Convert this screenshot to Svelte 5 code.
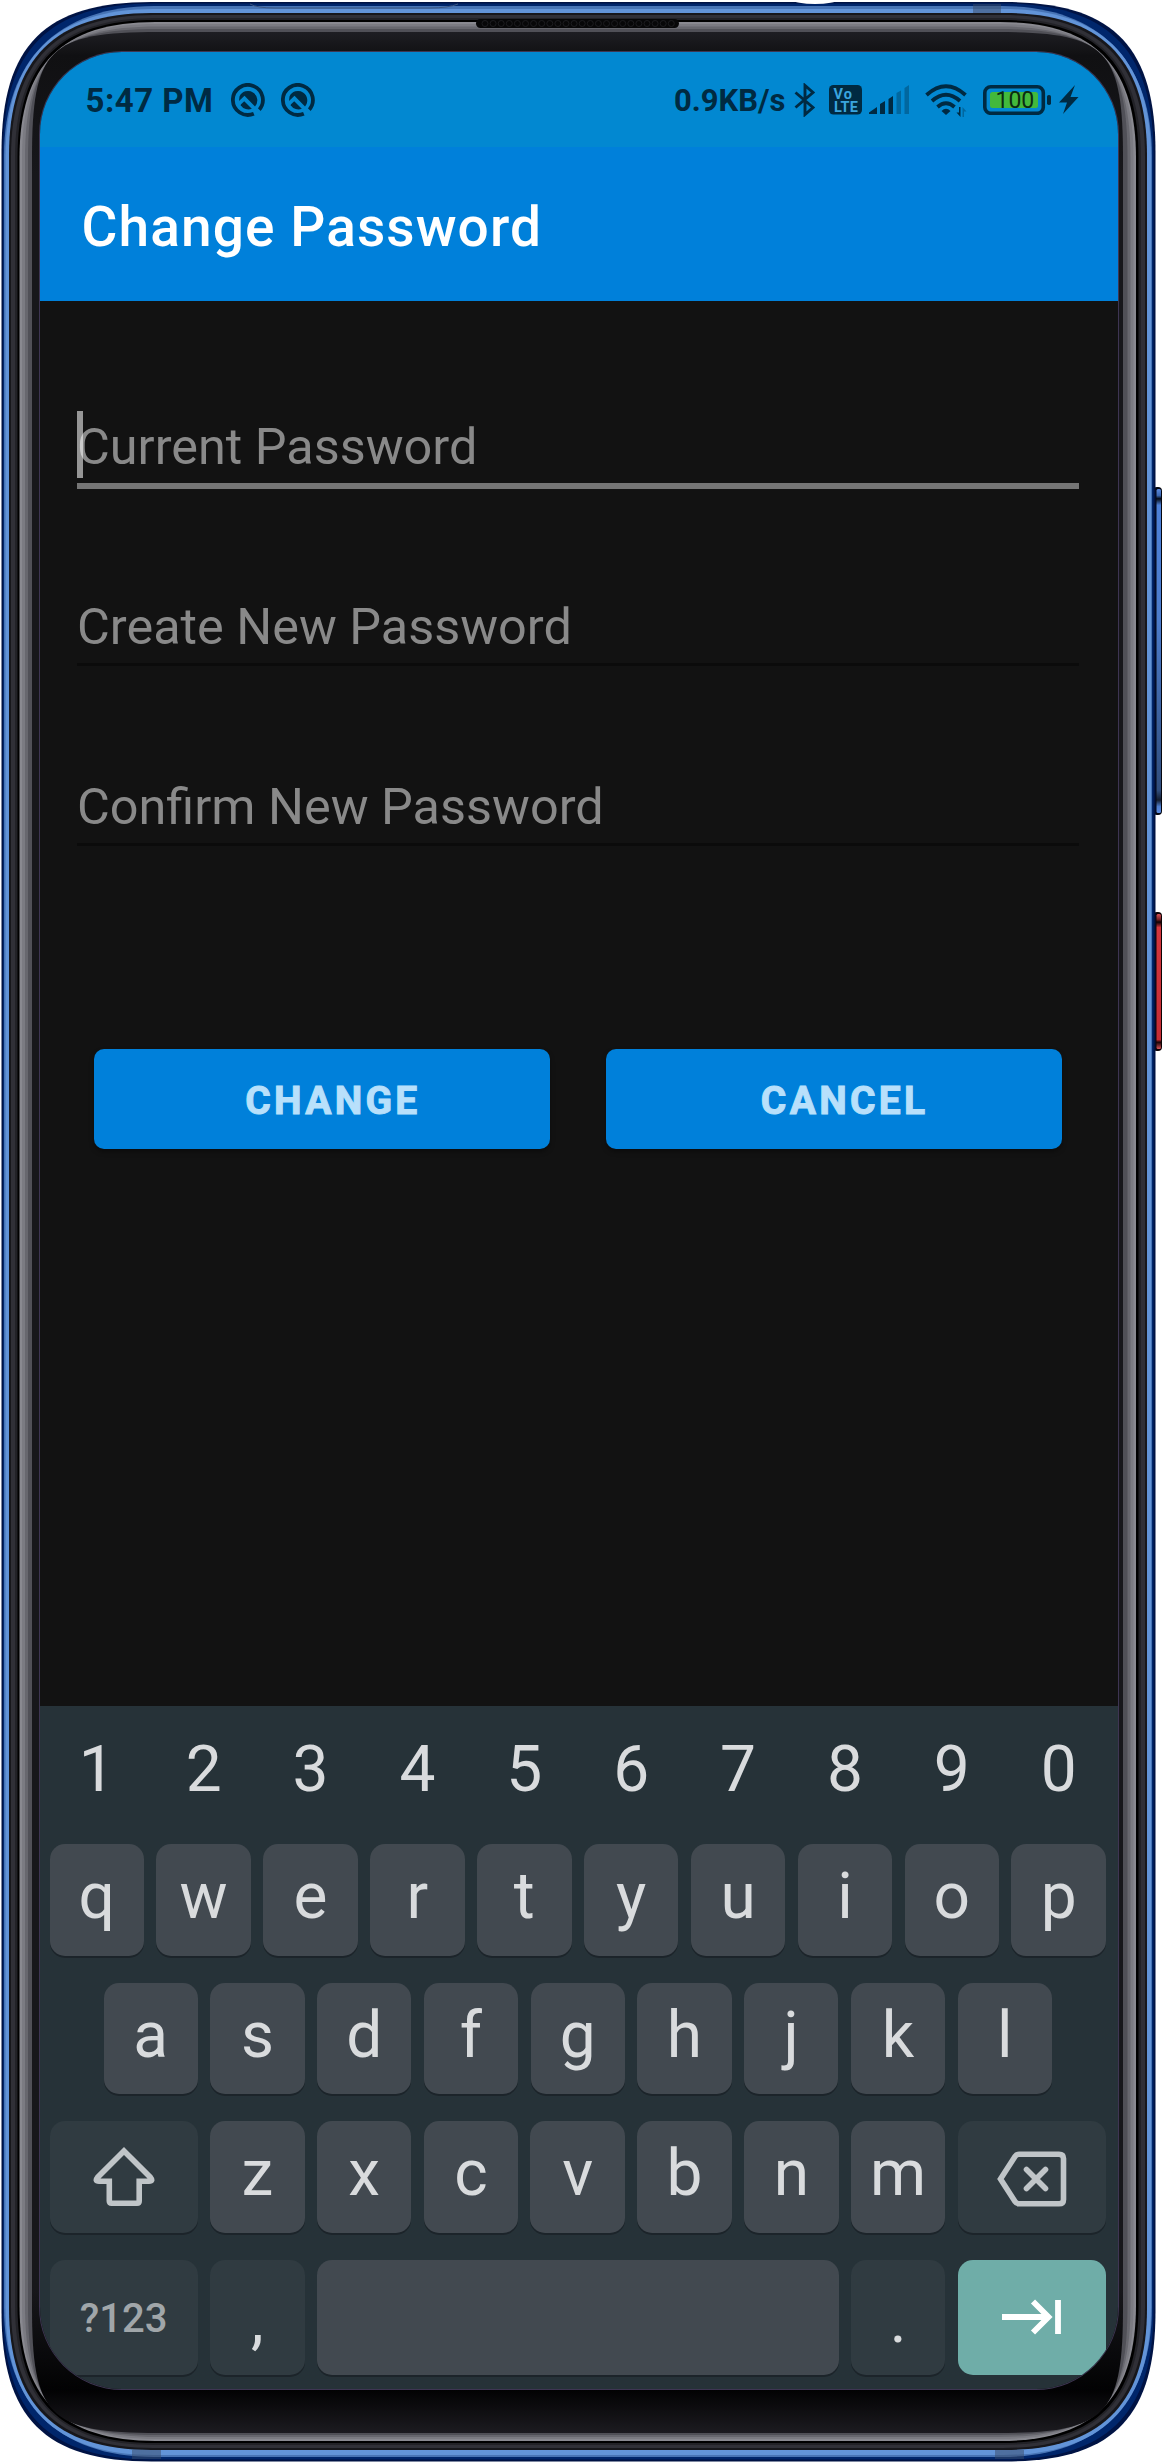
<script>
  // Rounded-rectangle outline with soft, squircle-like corners.
  // reach: length of each corner curve, depth: inset of the curve on the diagonal.
  function shell(l, t, r, b, reach, depth) {
    const c = (8 * depth - reach) / 3;
    return [
      `M${l} ${t + reach}`,
      `C${l} ${t + c} ${l + c} ${t} ${l + reach} ${t}`,
      `H${r - reach}`,
      `C${r - c} ${t} ${r} ${t + c} ${r} ${t + reach}`,
      `V${b - reach}`,
      `C${r} ${b - c} ${r - c} ${b} ${r - reach} ${b}`,
      `H${l + reach}`,
      `C${l + c} ${b} ${l} ${b - c} ${l} ${b - reach}Z`
    ].join('');
  }

  const layers = [
    { d: shell(1.5, 2, 1155.5, 2461.5, 150, 35), fill: '#001344' },
    { d: shell(3, 3.5, 1153.5, 2459.5, 150, 36), fill: '#00266b' },
    { d: shell(4, 6, 1152, 2457, 150, 39), fill: '#4774b5' },
    { d: shell(5.5, 9, 1151, 2455, 148, 37), fill: '#6294d8' },
    { d: shell(9, 13, 1147, 2450, 142, 35), fill: '#17171b' },
    { d: shell(11, 15, 1145, 2448, 142, 35), fill: '#303037' },
    { d: shell(15, 18, 1141, 2445, 140, 34), fill: '#222227' },
    { d: shell(17.5, 20, 1138.5, 2443, 138, 33), fill: '#000000' },
    { d: shell(19.5, 22, 1136, 2441, 136, 33), fill: '#898990' },
    { d: shell(22, 24, 1133.5, 2439, 134, 31), fill: '#7b7b82' },
    { d: shell(25, 26.5, 1130.5, 2437, 132, 29), fill: '#67676e' },
    { d: shell(28, 29, 1127.5, 2435, 130, 26), fill: '#505057' },
    { d: shell(32, 32, 1123, 2433, 126, 22), fill: 'url(#bezel)' }
  ];

  const grille = Array.from({ length: 24 }, (_, i) => 485 + i * 8.1);

  const digits = [...'1234567890'];
  const top = [...'qwertyuiop'];
  const home = [...'asdfghjkl'];
  const bottom = [...'zxcvbnm'];
  const fields = [
    { hint: 'Current Password', active: true },
    { hint: 'Create New Password', active: false },
    { hint: 'Confirm New Password', active: false }
  ];
</script>

{#snippet notice()}
  <svg class="notice" width="34" height="34" viewBox="0 0 34 34">
    <path d="M27.8 27.2A15 15 0 1 0 22.8 30.7" fill="none" stroke="currentColor" stroke-width="3.8" />
    <path d="M8.500 13.500A9.300 9.300 0 1 1 24 23.400L13.500 12.800L8 18Z" fill="currentColor" />
    <path d="M13.200 18.200L20.800 25.800A9.300 9.300 0 0 1 9.800 22.500V21.500Z" fill="currentColor" />
    <path d="M25.500 25.500L30.500 30.500" stroke="#0288d1" stroke-width="2.400" />
  </svg>
{/snippet}

<div class="stage">
  <svg class="chassis" width="1162" height="2462" viewBox="0 0 1162 2462">
    <defs>
      <linearGradient id="bezel" x1="0" y1="0" x2="0" y2="1">
        <stop offset="0" stop-color="#1e1e23" />
        <stop offset="0.01" stop-color="#101012" />
        <stop offset="0.06" stop-color="#17171b" />
        <stop offset="0.94" stop-color="#17171b" />
        <stop offset="0.982" stop-color="#020203" />
        <stop offset="1" stop-color="#1c1b20" />
      </linearGradient>
      <linearGradient id="volume" x1="0" y1="0" x2="0" y2="1">
        <stop offset="0" stop-color="#5b8ae0" />
        <stop offset="0.02" stop-color="#3a66b0" />
        <stop offset="0.03" stop-color="#050a14" />
        <stop offset="0.05" stop-color="#4c80d8" />
        <stop offset="0.4" stop-color="#4c7ccc" />
        <stop offset="0.93" stop-color="#304d7c" />
        <stop offset="0.96" stop-color="#141d2e" />
        <stop offset="0.98" stop-color="#4c7ccc" />
        <stop offset="1" stop-color="#5b8ae0" />
      </linearGradient>
      <linearGradient id="power" x1="0" y1="0" x2="0" y2="1">
        <stop offset="0" stop-color="#d8545a" />
        <stop offset="0.04" stop-color="#7a2226" />
        <stop offset="0.06" stop-color="#0a0203" />
        <stop offset="0.1" stop-color="#d3363e" />
        <stop offset="0.93" stop-color="#c42d35" />
        <stop offset="0.95" stop-color="#1a0506" />
        <stop offset="1" stop-color="#d8545a" />
      </linearGradient>
    </defs>
    <rect x="1153" y="487" width="9" height="328" rx="4" fill="#05070f" />
    <rect x="1156.5" y="489" width="4.500" height="324" rx="1.5" fill="url(#volume)" />
    <rect x="1153" y="912" width="9" height="139" rx="4" fill="#0d0304" />
    <rect x="1156.5" y="914" width="4.500" height="135" rx="1.5" fill="url(#power)" />
    {#each layers as layer}
      <path d={layer.d} fill={layer.fill} />
    {/each}
    <path d="M250 4Q257 8 275 8H430Q448 8 458 4" fill="none" stroke="#3d5680" stroke-width="1" />
    <ellipse cx="815" cy="0" rx="22" ry="4" fill="#ffffff" />
    <g fill="#3a4a66" opacity="0.5">
      <rect x="973" y="4" width="28" height="9" />
      <rect x="132" y="2450" width="29" height="9" />
      <rect x="995" y="2450" width="29" height="9" />
    </g>
    <rect x="476" y="19" width="203" height="9" rx="4.5" fill="#070708" />
    {#each grille as x}
      <circle cx={x} cy="23.5" r="3" fill="none" stroke="#1d1d20" stroke-width="1" />
    {/each}
  </svg>

  <main class="screen">
    <header class="status">
      <span class="clock">5:47 PM</span>
      {@render notice()}
      {@render notice()}
      <span class="speed">0.9KB/s</span>
      <svg class="bt" width="22" height="34" viewBox="0 0 22 34">
        <path d="M1.5 9.5L19 24.5L11 31.5V2.5L19 9.5L1.5 24.5" fill="none" stroke="currentColor" stroke-width="2.9" />
      </svg>
      <svg class="volte" width="33" height="30" viewBox="0 0 33 30">
        <rect width="33" height="29.5" rx="4.5" fill="currentColor" />
        <text x="4.500" y="13.500" textLength="18.500" class="tiny">Vo</text>
        <text x="5" y="26.500" textLength="24" class="tiny">LTE</text>
      </svg>
      <svg class="signal" width="41" height="30" viewBox="0 0 41 30">
        <path d="M0 29V27.5L8 22V29ZM11 29V19L16 16V29ZM19.500 29V14L24 11V29Z" fill="currentColor" />
        <path d="M27.500 29V8L32 5.500V29ZM35.500 29V3L40 0V29Z" fill="currentColor" opacity="0.35" />
      </svg>
      <svg class="wifi" width="43" height="34" viewBox="0 0 43 34">
        <g fill="none" stroke="currentColor" stroke-width="3.8">
          <path d="M1.500 11Q21 -6.500 40.500 11" />
          <path d="M7 17Q21 4.500 35 17" />
          <path d="M12.500 23Q21 15.500 29.500 23" />
        </g>
        <path d="M16.500 27Q21 22.500 25.500 27L21 31Z" fill="currentColor" />
        <path d="M35.500 23V33L31.500 28.500H34V23Z" fill="currentColor" />
        <path d="M37.500 33V23L41.500 27.500H39V33Z" fill="currentColor" opacity="0.35" />
      </svg>
      <svg class="battery" width="69" height="30" viewBox="0 0 69 30">
        <rect x="1.800" y="1.800" width="58.500" height="26.500" rx="6" fill="none" stroke="currentColor" stroke-width="3.600" />
        <rect x="7" y="7" width="48" height="16" rx="2.500" fill="#43b93c" />
        <rect x="64" y="10" width="4" height="10" rx="1.800" fill="currentColor" />
        <text x="12.500" y="23.300" class="charge">100</text>
      </svg>
      <svg class="bolt" width="20" height="30" viewBox="0 0 20 30">
        <path d="M16 0L0 17.500H8L4 29L19.500 12H11.500Z" fill="currentColor" />
      </svg>
    </header>

    <div class="appbar"><h1>Change Password</h1></div>

    <section class="form">
      {#each fields as field}
        <div class="field" class:active={field.active}>
          <span class="hint">{field.hint}</span>
          {#if field.active}<i class="caret"></i>{/if}
        </div>
      {/each}
      <div class="actions">
        <button>CHANGE</button>
        <button class="cancel">CANCEL</button>
      </div>
    </section>

    <section class="keyboard">
      <div class="row digits">
        {#each digits as k}<span class="digit">{k}</span>{/each}
      </div>
      <div class="row">
        {#each top as k}<span class="key">{k}</span>{/each}
      </div>
      <div class="row home">
        {#each home as k}<span class="key">{k}</span>{/each}
      </div>
      <div class="row">
        <span class="key wide dim">
          <svg width="62" height="60" viewBox="0 0 62 60">
            <path d="M31 4L57.500 30.500Q60.500 34.200 56 34.200H46.200V54Q46.200 56.200 44 56.200H18.500Q16.300 56.200 16.300 54V34.200H6Q1.500 34.200 4.500 30.500Z" fill="none" stroke="#c0c5c8" stroke-width="5.600" />
          </svg>
        </span>
        {#each bottom as k}<span class="key">{k}</span>{/each}
        <span class="key wide dim">
          <svg class="erase" width="70" height="56" viewBox="0 0 70 56">
            <path d="M3.500 28L18 5.500Q19.500 3.200 22 3.200H62Q66.500 3.200 66.500 7.500V48.500Q66.500 52.800 62 52.800H22Q19.500 52.800 18 50.500Z" fill="none" stroke="#c0c5c8" stroke-width="5.600" />
            <path d="M29.500 18.500L48.500 37.500M48.500 18.500L29.500 37.500" stroke="#c0c5c8" stroke-width="5.600" stroke-linecap="round" />
          </svg>
        </span>
      </div>
      <div class="row last">
        <span class="key wide dim mode">?123</span>
        <span class="key dim comma">,</span>
        <span class="key space"></span>
        <span class="key dim period">.</span>
        <span class="key wide next">
          <svg width="60" height="36" viewBox="0 0 60 36">
            <path d="M0 18H46M31 2.500L46.500 18L31 33.500M56 1V35" fill="none" stroke="#ffffff" stroke-width="5.800" />
          </svg>
        </span>
      </div>
    </section>
  </main>
</div>

<style>
  :global(body) {
    margin: 0;
    background: #ffffff;
  }
  .stage {
    position: relative;
    box-sizing: border-box;
    width: 1162px;
    height: 2462px;
    padding: 52px 0 0 39.5px;
    overflow: hidden;
    font-family: Roboto, 'Liberation Sans', sans-serif;
  }
  .chassis {
    position: absolute;
    inset: 0;
  }
  .screen {
    position: relative;
    box-sizing: border-box;
    display: flex;
    flex-direction: column;
    width: 1078.5px;
    height: 2336.5px;
    border-radius: 82px;
    overflow: hidden;
    background: #121212;
    box-shadow: 0 0 0 1px #3e3553;
  }
  svg {
    display: block;
    flex: none;
  }

  .status {
    box-sizing: border-box;
    display: flex;
    align-items: center;
    height: 95px;
    flex: none;
    padding: 0 39px 0 46px;
    background: #0288d1;
    color: #002a42;
    white-space: nowrap;
  }
  .clock {
    width: 128.5px;
    margin-top: 2px;
    font-size: 33px;
    font-weight: 700;
    letter-spacing: 0.5px;
  }
  .notice {
    margin-left: 16.5px;
  }
  .speed {
    width: 113px;
    margin: 1px 0 0 auto;
    font-size: 31px;
    font-weight: 700;
  }
  .bt {
    margin-left: 7px;
  }
  .volte {
    margin-left: 13px;
  }
  .signal {
    margin-left: 7px;
  }
  .wifi {
    margin: 3px 0 0 15px;
  }
  .battery {
    margin-left: 15px;
  }
  .bolt {
    margin-left: 7px;
  }
  .tiny {
    font-size: 14.5px;
    font-weight: 700;
    fill: #3aa5de;
  }
  .charge {
    font-size: 23px;
    fill: #0b2b12;
  }

  .appbar {
    box-sizing: border-box;
    display: flex;
    align-items: center;
    flex: none;
    height: 154px;
    padding: 6px 0 0 42px;
    background: #0080da;
  }
  h1 {
    margin: 0;
    color: #ffffff;
    font-size: 55px;
    font-weight: 500;
    line-height: 64px;
    letter-spacing: 1.1px;
  }

  .form {
    flex: 1;
    padding: 65px 39.5px 0 37.5px;
  }
  .field {
    position: relative;
    box-sizing: border-box;
    height: 120px;
    margin-bottom: 60px;
    padding-top: 51px;
    border-bottom: 3px solid #0b0b0b;
  }
  .field.active {
    height: 123px;
    margin-bottom: 57px;
    border-bottom: 6px solid #757575;
  }
  .hint {
    display: block;
    font-size: 50.4px;
    line-height: 60px;
    color: #898989;
  }
  .caret {
    position: absolute;
    left: 0;
    top: 45px;
    width: 6px;
    height: 67px;
    background: rgba(255, 255, 255, 0.56);
  }
  .actions {
    display: flex;
    gap: 56px;
    padding: 143px 17px 0;
  }
  button {
    flex: 1;
    height: 100px;
    padding: 3px 0 0 22px;
    border: 0;
    border-radius: 10px;
    background: #0080da;
    box-shadow: 0 3px 5px rgba(0, 0, 0, 0.35);
    color: #b8e0fb;
    font: 700 39px/50px Roboto, 'Liberation Sans', sans-serif;
    letter-spacing: 3.3px;
    -webkit-text-stroke: 1px #b8e0fb;
  }

  .keyboard {
    box-sizing: border-box;
    display: flex;
    flex-direction: column;
    gap: 27px;
    flex: none;
    height: 682.5px;
    padding: 17px 12px 0 10px;
    background: #263238;
    color: #d9dbdd;
    font-size: 64px;
    line-height: 106px;
  }
  .row {
    display: flex;
    gap: 12.3px;
    height: 111.5px;
  }
  .digits {
    height: 94px;
  }
  .digit {
    flex: 1;
    margin-top: -6px;
    line-height: 106px;
    text-align: center;
  }
  .home {
    padding: 0 54px;
  }
  .key {
    flex: 1 1 0;
    text-align: center;
    border-radius: 15px;
    background: #424950;
    box-shadow: 0 2px 0 #1c242a;
  }
  .dim {
    background: #303b41;
  }
  .wide {
    display: flex;
    align-items: center;
    justify-content: center;
    flex: 0 0 148.3px;
  }
  .erase {
    margin-top: 5px;
  }
  .last {
    height: 115px;
  }
  .mode {
    box-sizing: border-box;
    padding-top: 3px;
    font-size: 40px;
    font-weight: 500;
    color: #a0a6a9;
  }
  .comma,
  .period {
    flex: 0 0 94.5px;
    line-height: 122px;
  }
  .next {
    background: #6fada8;
    box-shadow: none;
  }
</style>
